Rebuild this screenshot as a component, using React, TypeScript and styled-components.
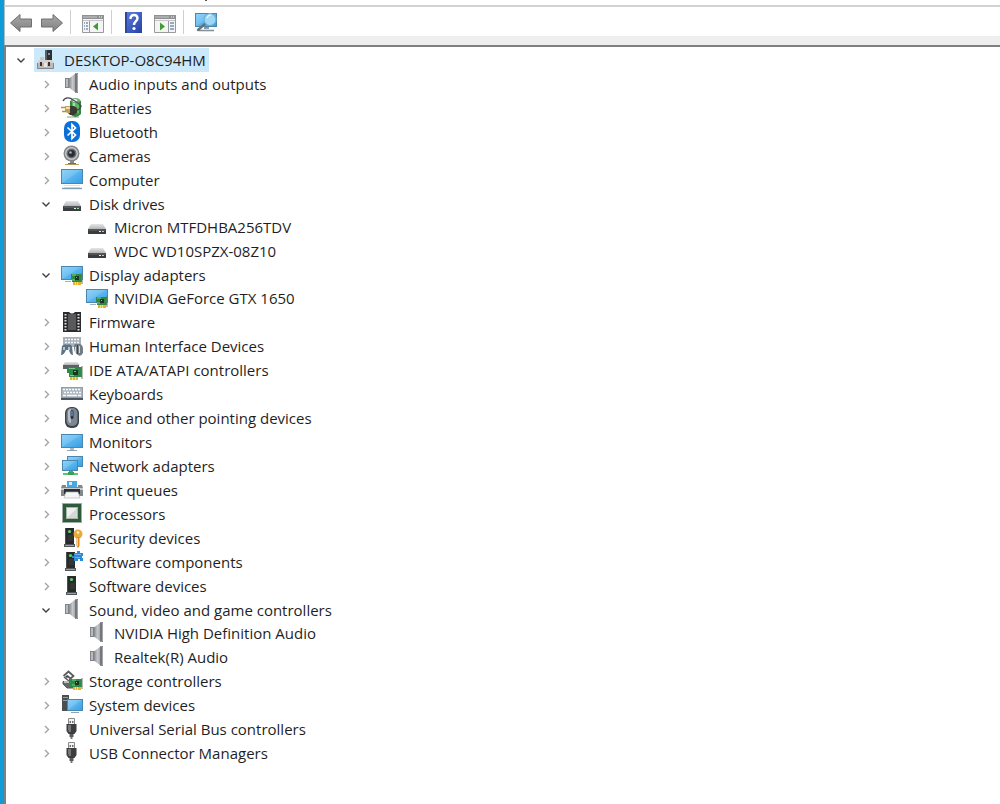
import React, { useState } from "react";
import styled, { createGlobalStyle } from "styled-components";

const GlobalStyle = createGlobalStyle`
  *, *::before, *::after { box-sizing: border-box; }
  body { margin: 0; background: #fff; }
`;

/* ---------- window frame ---------- */

const Window = styled.div`
  display: flex;
  min-height: 100vh;
  background: #fff;
  border-left: 4px solid #0e9bd8;
  color: #1f1f1f;
  font-family: "Open Sans", "Noto Sans", sans-serif;
  font-size: 15px;
  line-height: 24px;
`;

const Frame = styled.main`
  flex: 1;
  min-width: 0;
  display: flex;
  flex-direction: column;
`;

const MenuEdge = styled.div`
  height: 7px;
  padding-left: 200px;
  border-left: 1px solid #a9bcc6;
  border-bottom: 2px solid #d2d2d2;
`;

const MenuMark = styled.div`
  width: 2px;
  height: 1px;
  background: #555;
`;

const Toolbar = styled.div`
  display: flex;
  align-items: stretch;
  padding: 3px 4px 2px;
  border-left: 1px solid #a9bcc6;
`;

const ToolGroup = styled.div`
  display: flex;
  gap: 7px;
`;

const ToolButton = styled.button`
  display: block;
  width: 24px;
  height: 24px;
  padding: 0;
  border: 0;
  background: none;
`;

const Separator = styled.span`
  width: 1px;
  margin: 0 10px 0 6px;
  background: #cfcfcf;
`;

const Divider = styled.div`
  height: 9px;
  background: #eeeeee;
  border-left: 1px solid #a9bcc6;
`;

const Panel = styled.section`
  flex: 1;
  padding: 1px 0 24px 7px;
  border-top: 2px solid #808080;
  border-left: 2px solid #7b8084;
`;

/* ---------- tree ---------- */

const TreeList = styled.ul`
  margin: 0;
  padding: 0;
  list-style: none;
`;

const Branch = styled(TreeList)<{ $depth: number }>`
  margin-top: ${(p) => (p.$depth > 1 ? "-1px" : "0")};
  padding-left: 25px;
`;

const Row = styled.div`
  display: flex;
  align-items: center;
  gap: 5px;
  height: 24px;
`;

const Expander = styled.button<{ $open: boolean }>`
  display: grid;
  place-items: center;
  width: 16px;
  height: 16px;
  padding: 0;
  border: 0;
  background: none;
  color: ${(p) => (p.$open ? "#404040" : "#a3a3a3")};
`;

const Leaf = styled.span`
  width: 16px;
`;

const Item = styled.button<{ $selected: boolean }>`
  display: flex;
  align-items: center;
  gap: 6px;
  height: 24px;
  padding: 0 3px 0 2px;
  border: 0;
  background: ${(p) => (p.$selected ? "#cce8fb" : "transparent")};
  color: inherit;
  font: inherit;
  white-space: nowrap;
`;

const Svg = styled.svg`
  display: block;
  flex: none;
`;

/* ---------- icon parts ---------- */

const Screen = ({ x, y, w, h }: { x: number; y: number; w: number; h: number }) => (
  <g>
    <rect x={x} y={y} width={w} height={h} fill="#4a86ad" />
    <rect x={x + 1} y={y + 1} width={w - 2} height={h - 2} fill="url(#screen)" />
    <path d={`M${x + 1} ${y + h - 1}V${y + 1}H${x + w - 2}Z`} fill="#fff" opacity=".14" />
  </g>
);

const Card = ({ x, y }: { x: number; y: number }) => (
  <g transform={`translate(${x} ${y})`}>
    <path d="M2 8h8v4H2z" fill="#e2b32d" />
    <path d="M4.500 9v3M6.500 9v3" stroke="#f7dd7c" />
    <path d="M0 1h11v8H1V6H0z" fill="#2d8a46" />
    <path d="M1 2h4M1 7h3" stroke="#7cc78c" />
    <rect x="4" y="3" width="4" height="4" fill="#1c3425" />
    <path d="M5 4h1v1H5z" fill="#8bb99a" />
    <path d="M11 0v11" stroke="#6f7a73" />
  </g>
);

const Drive = () => (
  <g>
    <path d="M5 8h12l3 5H2z" fill="url(#lid)" />
    <rect x="2" y="13" width="18" height="5" rx="0.500" fill="#3a3d3f" />
    <path d="M3 14h16" stroke="#6b6f71" />
    <rect x="13" y="15" width="2" height="1" fill="#e7f5ec" />
    <rect x="16" y="15" width="2" height="1" fill="#8ce3a4" />
  </g>
);

const Tower = () => (
  <g>
    <path d="M6 1h9v17H6z" fill="#272b2a" />
    <path d="M6 1h1v17H6z" fill="#4b504e" />
    <circle cx="10.500" cy="4.500" r="1.600" fill="#58d36a" />
    <path d="M9 9h5M9 11h5M9 13h5" stroke="#3e4442" />
    <path d="M5 17h11v3H5z" fill="#50565a" />
    <path d="M6 18.500h9" stroke="#9aa0a4" />
  </g>
);

const Speaker = () => (
  <g>
    <path d="M4 5h5v10H4z" fill="#7f8387" />
    <path d="M5 6h2v8H5z" fill="#b9bcbf" />
    <path d="M8 5.500L15 0v20L8 14.500z" fill="url(#cone)" />
    <path d="M14 .5L17 0v20l-3-.5z" fill="#74787c" />
    <path d="M16.500 1v18" stroke="#a2a5a8" />
  </g>
);

const Usb = () => (
  <g>
    <path d="M7.500 7V.5h6V7" fill="#f4f4f4" stroke="#8a8a8a" />
    <path d="M8.500 3H10v2H8.500zM11 3h1.500v2H11z" fill="#707070" />
    <path d="M5.500 6h10v7l-2 3h-6l-2-3z" fill="#3d3d3f" />
    <path d="M7 7h3v7H8l-1-2z" fill="#737577" />
    <path d="M8.500 16h4v3h-4z" fill="#58595b" />
    <path d="M9.500 19h2v2h-2z" fill="#77787a" />
  </g>
);

const icons: Record<string, React.ReactNode> = {
  root: (
    <g>
      <path d="M9 1h7v11H9z" fill="#2c3032" />
      <path d="M9 1h2v11H9z" fill="#596062" />
      <path d="M12 4h2v2h-2z" fill="#8b9497" />
      <path d="M4 8h4v5H4z" fill="#c8c8c8" />
      <path d="M3 11h13l2 3v6H1v-6z" fill="#d3d2cf" />
      <path d="M1.500 14v5.500h16V14" fill="#bcbbb8" stroke="#85858a" />
      <path d="M4 13h2v4H4zM12 13h2v4h-2z" fill="#3c2d30" />
      <path d="M8 14h3v4H8z" fill="#e8e7e5" />
    </g>
  ),
  speaker: <Speaker />,
  battery: (
    <g>
      <path d="M9 4q5.500-5 11 0v13q-5.500 6-11 0z" fill="#2f8a3f" />
      <path d="M11 5q3-2 7 0v11q-3 2-7 0z" fill="#57bb5e" />
      <path d="M12 6h2v10h-2z" fill="#a4e29e" />
      <ellipse cx="14.500" cy="3.500" rx="4.500" ry="2.500" fill="#74a97a" />
      <ellipse cx="14" cy="3.500" rx="2.500" ry="1.500" fill="#eef6ee" />
      <path d="M2 4C4 0 9 0 12 3q5 2 8 6-1 4-5 4" fill="none" stroke="#4b4458" strokeWidth="1.300" />
      <path d="M7 9h6l3 2v5l-3 2H9l-2-2z" fill="#3a3932" />
      <path d="M4 9h5v7H6l-2-2z" fill="#bba45a" />
      <path d="M5 10h4v2H5z" fill="#efe0a8" />
      <path d="M0 10.500h4M1 14.500h4" stroke="#c08f1f" strokeWidth="1.600" />
      <path d="M6 20h12" stroke="#2b6d35" strokeWidth="1.200" opacity=".5" />
    </g>
  ),
  bluetooth: (
    <g>
      <rect x="3" y="0" width="16" height="21" rx="7" fill="#0b71d9" />
      <path d="M6.500 6.500L14.500 14 11 17.500v-14L14.500 7l-8 7.500" fill="none" stroke="#fff" strokeWidth="1.700" />
    </g>
  ),
  camera: (
    <g>
      <path d="M9 15h4v4H9z" fill="#8c8c8c" />
      <path d="M4 19.500h14" stroke="#b59a62" />
      <path d="M7 18.500h8" stroke="#6b6b6b" />
      <circle cx="10.500" cy="8.500" r="8" fill="#85888b" />
      <circle cx="10.500" cy="8.500" r="6.500" fill="#c6c8ca" />
      <circle cx="10.500" cy="8.500" r="5" fill="#6a6d71" />
      <circle cx="10.500" cy="8.500" r="3.400" fill="#2a2d33" />
      <circle cx="9.500" cy="7.500" r="1.300" fill="#9db1c8" />
    </g>
  ),
  computer: (
    <g>
      <Screen x={0} y={0} w={22} h={15} />
      <path d="M3 16.500h16" stroke="#dbe7ef" />
      <path d="M1 19.500h20" stroke="#7f9fb3" strokeWidth="1.400" />
      <path d="M3 18.500h16" stroke="#c3d4de" />
    </g>
  ),
  drive: <Drive />,
  display: (
    <g>
      <Screen x={0} y={2} w={22} h={14} />
      <path d="M4 17.500h6" stroke="#9fb2be" />
      <Card x={10} y={9} />
    </g>
  ),
  firmware: (
    <g>
      <path d="M2 1h6q3 3 6 0h6v20H2z" fill="#2c2c2e" />
      <path d="M7 3h8v16H7z" fill="#59595c" />
      <path d="M4.500 3v17M17.500 3v17" stroke="#e2e2e2" strokeWidth="2" strokeDasharray="1.500 1.500" />
    </g>
  ),
  hid: (
    <g>
      <path d="M2 2h18v10H2z" fill="#a9b2ba" />
      <path d="M4 4.500h15M4 7.500h15" stroke="#f3f5f7" strokeWidth="1.500" strokeDasharray="2 1" />
      <path d="M0 20l1-9q3-3 5-1 2-2 5 1l1 9q-3 0-4-5H5q-2 5-5 5z" fill="#5e7285" />
      <path d="M2 12h2v3H2zM7 12h2v3H7z" fill="#a9c7dd" />
      <path d="M13 12q0-4 3-3h3q3 1 3 5v4q-2 4-5 2-4-2-4-8z" fill="#747d85" />
      <path d="M14.500 12v6M18.500 11v7" stroke="#d3dce4" />
      <path d="M16.500 10v9" stroke="#3c464f" />
    </g>
  ),
  ide: (
    <g>
      <path d="M4 3h12l3 3H2z" fill="url(#lid)" />
      <path d="M2 6h16v4H2z" fill="#5c6163" />
      <path d="M9 18h8v3H9z" fill="#e2b32d" />
      <path d="M11.500 18v3M14.500 18v3" stroke="#f7dd7c" />
      <path d="M6 8h15v10H8v-4H6z" fill="#2d8a46" />
      <path d="M8 9.500h6M9 16.500h4" stroke="#7cc78c" />
      <rect x="12" y="11" width="5" height="5" fill="#1c3425" />
      <path d="M13 12h2v1h-2z" fill="#8bb99a" />
      <path d="M21 7v13" stroke="#6f7a73" />
    </g>
  ),
  keyboard: (
    <g>
      <path d="M0 4h22v13H0z" fill="#929ca8" />
      <path d="M1 5h20v9H1z" fill="#aeb7c1" />
      <path d="M2 6.500h18M3 9.500h17" stroke="#f7f9fa" strokeWidth="1.500" strokeDasharray="2 1" />
      <path d="M2 12.500h3M6 12.500h10M17 12.500h3" stroke="#f7f9fa" strokeWidth="1.500" />
      <path d="M0 16h22" stroke="#4b5661" strokeWidth="2" />
    </g>
  ),
  mouse: (
    <g>
      <rect x="4" y="0" width="14" height="21" rx="6" fill="#3e444b" />
      <rect x="5.500" y="1" width="11" height="18" rx="5" fill="#7c8791" />
      <path d="M7 5q0-3 3-3v14q-3 0-3-5z" fill="#b5c0ca" />
      <rect x="9.500" y="3" width="3" height="9" rx="1.500" fill="#2c3744" />
      <path d="M11 4v5" stroke="#82b9e6" />
    </g>
  ),
  monitor: (
    <g>
      <Screen x={0} y={3} w={22} h={14} />
      <path d="M9 17h4v2H9z" fill="#a9b9c4" />
      <path d="M6 19.500h10" stroke="#8fa5b3" />
    </g>
  ),
  network: (
    <g>
      <Screen x={6} y={1} w={16} h={11} />
      <Screen x={1} y={5} w={16} h={11} />
      <path d="M8 16h4v2H8z" fill="#4ba862" />
      <path d="M2 19h15" stroke="#5cc672" strokeWidth="2" />
      <path d="M7 17h6v3H7z" fill="#37a052" />
    </g>
  ),
  printer: (
    <g>
      <path d="M6 2h10v6H6z" fill="#4aa8df" />
      <path d="M8 3h3v3H8z" fill="#d3edfa" />
      <path d="M1 6h4v2h12V6h4l1 3v8h-4v-3H4v3H0V9z" fill="#83888c" />
      <path d="M0 9h22v2H0z" fill="#c9cdd0" />
      <path d="M3 10h16v5H3z" fill="#2c3033" />
      <path d="M5 13h12l2 6H3z" fill="#f4f6f7" stroke="#aab0b4" strokeWidth=".600" />
    </g>
  ),
  processor: (
    <g>
      <rect x="2" y="1" width="18" height="18" fill="#2f5a3b" />
      <rect x="1.500" y=".5" width="19" height="19" fill="none" stroke="#3b5f45" strokeDasharray="1 1" />
      <rect x="5" y="4" width="12" height="12" fill="#a9b5ab" />
      <rect x="6" y="5" width="10" height="10" fill="#d5d9d6" />
      <path d="M6 15V5h10z" fill="#eef0ee" />
    </g>
  ),
  security: (
    <g>
      <g transform="translate(-2 0)">
        <Tower />
      </g>
      <circle cx="17" cy="7" r="4.500" fill="#e9a93e" />
      <circle cx="17" cy="5.500" r="1.300" fill="#fff3d4" />
      <path d="M15.500 10h3v9l-1.500 2-1.500-2z" fill="#d98f24" />
      <path d="M16.500 11v8" stroke="#f9d27e" />
    </g>
  ),
  component: (
    <g>
      <g transform="translate(-1 0)">
        <Tower />
      </g>
      <path d="M13 2h3V0h3v2h3v3h-1v2h1v3h-3V8h-2v2h-4V7h-2V5h2z" fill="#2b8bd8" />
      <path d="M14 3.500h6M14 6.500h5" stroke="#6db4ec" />
    </g>
  ),
  device: <Tower />,
  storage: (
    <g>
      <path d="M2.500 6l5-4.500 5 4.500-3 2.500-2.500-2" fill="none" stroke="#5a5d5f" strokeWidth="1.800" />
      <path d="M6 5l2 1-2 2-2-1z" fill="#444" />
      <path d="M2 11.500h8l3 3.500v3H6l-4-4z" fill="#64686a" stroke="#54585a" />
      <path d="M3 7l5 4" stroke="#5a5d5f" strokeWidth="1.600" />
      <path d="M3 12h7" stroke="#d8dadb" strokeWidth="1.500" />
      <path d="M8 9h3v8H8z" fill="#2d8a46" />
      <Card x={10} y={8} />
    </g>
  ),
  system: (
    <g>
      <path d="M1 1h7v16H1z" fill="#4a4f53" />
      <path d="M2 3.500h5M2 6.500h5" stroke="#98a2a9" />
      <Screen x={6} y={5} w={16} h={12} />
      <path d="M10 18.500h8" stroke="#8fa5b3" />
    </g>
  ),
  usb: <Usb />,
};

const Icon = ({ name }: { name: string }) => (
  <Svg width="22" height="22" viewBox="0 0 22 22" aria-hidden="true">
    {icons[name]}
  </Svg>
);

const Gradients = () => (
  <Svg width="0" height="0" aria-hidden="true">
    <defs>
      <linearGradient id="screen" x1="0" y1="0" x2="1" y2="1">
        <stop offset="0" stopColor="#7ccbf8" />
        <stop offset="1" stopColor="#36a0e6" />
      </linearGradient>
      <linearGradient id="lid" x1="0" y1="0" x2="0" y2="1">
        <stop offset="0" stopColor="#e6e6e6" />
        <stop offset="1" stopColor="#b4b6b7" />
      </linearGradient>
      <linearGradient id="cone" x1="0" y1="0" x2="1" y2="0">
        <stop offset="0" stopColor="#85888c" />
        <stop offset=".5" stopColor="#c6c8ca" />
        <stop offset="1" stopColor="#9a9da0" />
      </linearGradient>
      <linearGradient id="arrow" x1="0" y1="0" x2="0" y2="1">
        <stop offset="0" stopColor="#a9a9a9" />
        <stop offset="1" stopColor="#818181" />
      </linearGradient>
      <linearGradient id="book" x1="0" y1="0" x2="1" y2="1">
        <stop offset="0" stopColor="#5f7fdc" />
        <stop offset="1" stopColor="#2440a8" />
      </linearGradient>
    </defs>
  </Svg>
);

/* ---------- toolbar drawings ---------- */

const Arrow = ({ forward = false }: { forward?: boolean }) => (
  <Svg width="24" height="24" viewBox="0 0 24 24" aria-hidden="true">
    <path
      transform={forward ? "matrix(-1 0 0 1 24 0)" : undefined}
      d="M1.500 13L11 4.500V9h11.500v8H11v4.500z"
      fill="url(#arrow)"
      stroke="#707070"
      strokeLinejoin="round"
    />
  </Svg>
);

const PaneIcon = ({ action = false }: { action?: boolean }) => (
  <Svg width="24" height="24" viewBox="0 0 24 24" aria-hidden="true">
    <path d="M1.500 5.500h21v17h-21z" fill="#f4f4f4" stroke="#999" />
    <path d="M1 5h22v4H1z" fill="#8f9194" />
    <path d="M2 7h14" stroke="#c5c7c9" />
    <path d="M18 7h1M20 7h1" stroke="#fff" />
    <path d="M2 10.500h20" stroke="#c3c5c7" />
    {action ? (
      <g>
        <path d="M15.500 11v11" stroke="#9b9b9b" />
        <path d="M17 13h4M17 16h4M17 19h4" stroke="#7891b5" strokeWidth="1.500" />
        <path d="M7 12.500l5 4-5 4z" fill="#3f9c35" />
      </g>
    ) : (
      <g>
        <path d="M8.500 11v11" stroke="#9b9b9b" />
        <path d="M3 13h4M3 16h4M3 19h4" stroke="#7891b5" strokeWidth="1.500" strokeDasharray="1 1 2" />
        <path d="M17 12.500l-5 4 5 4z" fill="#3f9c35" />
      </g>
    )}
  </Svg>
);

const HelpIcon = () => (
  <Svg width="24" height="24" viewBox="0 0 24 24" aria-hidden="true">
    <path d="M3 2h17v21H3z" fill="url(#book)" />
    <path d="M3 2h2v21H3z" fill="#2d479f" />
    <path
      d="M8.500 9q0-4 3.500-4t3.500 3.500c0 2.500-3.500 3-3.500 6.500"
      fill="none"
      stroke="#fff"
      strokeWidth="2.400"
    />
    <circle cx="12" cy="18.500" r="1.600" fill="#fff" />
  </Svg>
);

const ScanIcon = () => (
  <Svg width="24" height="24" viewBox="0 0 24 24" aria-hidden="true">
    <Screen x={1} y={3} w={22} h={14} />
    <path d="M10 17h5v2h-5z" fill="#8b9aa4" />
    <path d="M5 20.500h15" stroke="#84929b" strokeWidth="1.600" />
    <path d="M12 13l-8 7" stroke="#66727a" strokeWidth="2.400" strokeLinecap="round" />
    <circle cx="16" cy="9.500" r="6" fill="#9fd8f7" stroke="#6fb0d6" strokeWidth="1.200" />
    <path d="M13 8q1-3 4-3" fill="none" stroke="#e6f6ff" strokeWidth="1.200" />
  </Svg>
);

/* ---------- data ---------- */

type Device = { label: string; icon: string; open?: boolean; children?: Device[] };

const closed = (label: string, icon: string): Device => ({ label, icon, children: [] });

const tree: Device = {
  label: "DESKTOP-O8C94HM",
  icon: "root",
  open: true,
  children: [
    closed("Audio inputs and outputs", "speaker"),
    closed("Batteries", "battery"),
    closed("Bluetooth", "bluetooth"),
    closed("Cameras", "camera"),
    closed("Computer", "computer"),
    {
      label: "Disk drives",
      icon: "drive",
      open: true,
      children: [
        { label: "Micron MTFDHBA256TDV", icon: "drive" },
        { label: "WDC WD10SPZX-08Z10", icon: "drive" },
      ],
    },
    {
      label: "Display adapters",
      icon: "display",
      open: true,
      children: [{ label: "NVIDIA GeForce GTX 1650", icon: "display" }],
    },
    closed("Firmware", "firmware"),
    closed("Human Interface Devices", "hid"),
    closed("IDE ATA/ATAPI controllers", "ide"),
    closed("Keyboards", "keyboard"),
    closed("Mice and other pointing devices", "mouse"),
    closed("Monitors", "monitor"),
    closed("Network adapters", "network"),
    closed("Print queues", "printer"),
    closed("Processors", "processor"),
    closed("Security devices", "security"),
    closed("Software components", "component"),
    closed("Software devices", "device"),
    {
      label: "Sound, video and game controllers",
      icon: "speaker",
      open: true,
      children: [
        { label: "NVIDIA High Definition Audio", icon: "speaker" },
        { label: "Realtek(R) Audio", icon: "speaker" },
      ],
    },
    closed("Storage controllers", "storage"),
    closed("System devices", "system"),
    closed("Universal Serial Bus controllers", "usb"),
    closed("USB Connector Managers", "usb"),
  ],
};

type NodeProps = {
  device: Device;
  depth: number;
  selected: string;
  onSelect: (label: string) => void;
};

const TreeNode = ({ device, depth, selected, onSelect }: NodeProps) => {
  const [open, setOpen] = useState(Boolean(device.open));
  const children = device.children;
  return (
    <li>
      <Row>
        {children ? (
          <Expander
            $open={open}
            aria-expanded={open}
            aria-label={`Toggle ${device.label}`}
            onClick={() => setOpen(!open)}
          >
            <Svg width="10" height="10" viewBox="0 0 10 10" aria-hidden="true">
              <path
                d={open ? "M1.500 3.500L5 7l3.500-3.500" : "M4 2l3.500 3.500L4 9"}
                fill="none"
                stroke="currentColor"
                strokeWidth="1.400"
              />
            </Svg>
          </Expander>
        ) : (
          <Leaf />
        )}
        <Item $selected={selected === device.label} onClick={() => onSelect(device.label)}>
          <Icon name={device.icon} />
          {device.label}
        </Item>
      </Row>
      {open && children && children.length > 0 && (
        <Branch $depth={depth + 1}>
          {children.map((child) => (
            <TreeNode
              key={child.label}
              device={child}
              depth={depth + 1}
              selected={selected}
              onSelect={onSelect}
            />
          ))}
        </Branch>
      )}
    </li>
  );
};

export default function App() {
  const [selected, setSelected] = useState(tree.label);
  return (
    <>
      <GlobalStyle />
      <Gradients />
      <Window>
        <Frame>
          <MenuEdge>
            <MenuMark />
          </MenuEdge>
          <Toolbar role="toolbar">
            <ToolGroup>
              <ToolButton aria-label="Back"><Arrow /></ToolButton>
              <ToolButton aria-label="Forward"><Arrow forward /></ToolButton>
            </ToolGroup>
            <Separator />
            <ToolButton aria-label="Show console tree"><PaneIcon /></ToolButton>
            <Separator />
            <ToolGroup>
              <ToolButton aria-label="Help"><HelpIcon /></ToolButton>
              <ToolButton aria-label="Show action pane"><PaneIcon action /></ToolButton>
            </ToolGroup>
            <Separator />
            <ToolButton aria-label="Scan for hardware changes"><ScanIcon /></ToolButton>
          </Toolbar>
          <Divider />
          <Panel>
            <TreeList>
              <TreeNode device={tree} depth={0} selected={selected} onSelect={setSelected} />
            </TreeList>
          </Panel>
        </Frame>
      </Window>
    </>
  );
}
